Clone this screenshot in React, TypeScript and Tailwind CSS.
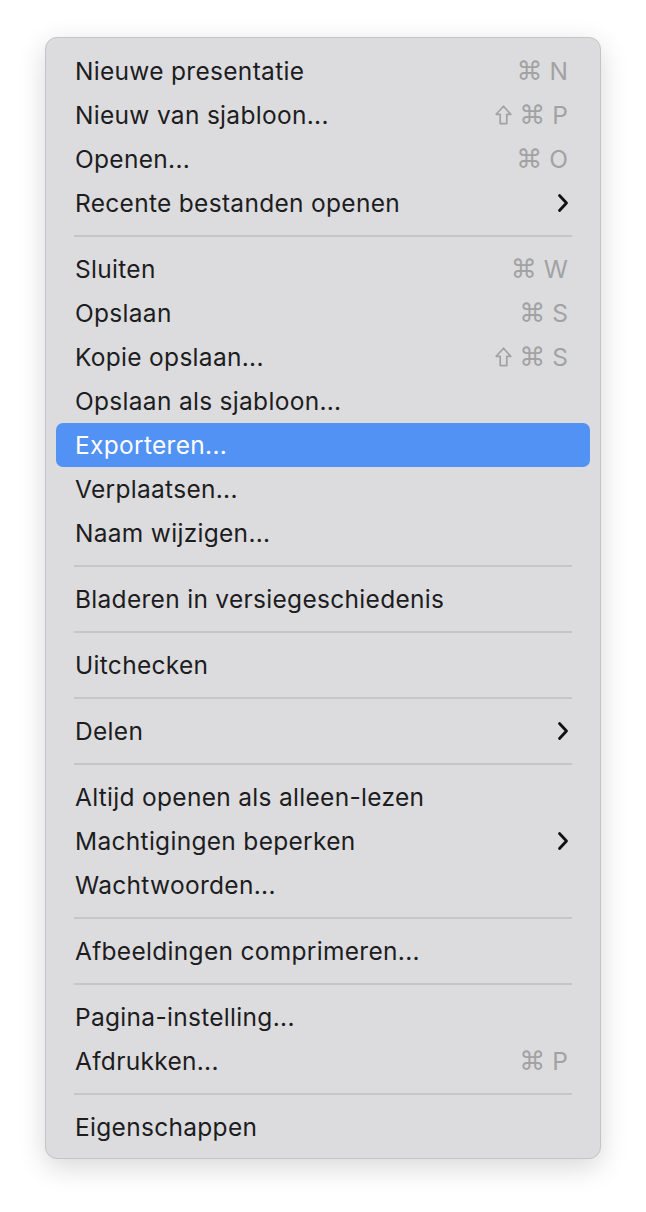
import React from "react";

type Item =
  | { type: "sep" }
  | { type: "item"; label: string; shortcut?: string[]; sub?: boolean; active?: boolean };

const items: Item[] = [
  { type: "item", label: "Nieuwe presentatie", shortcut: ["⌘", "N"] },
  { type: "item", label: "Nieuw van sjabloon...", shortcut: ["⇧", "⌘", "P"] },
  { type: "item", label: "Openen...", shortcut: ["⌘", "O"] },
  { type: "item", label: "Recente bestanden openen", sub: true },
  { type: "sep" },
  { type: "item", label: "Sluiten", shortcut: ["⌘", "W"] },
  { type: "item", label: "Opslaan", shortcut: ["⌘", "S"] },
  { type: "item", label: "Kopie opslaan...", shortcut: ["⇧", "⌘", "S"] },
  { type: "item", label: "Opslaan als sjabloon..." },
  { type: "item", label: "Exporteren...", active: true },
  { type: "item", label: "Verplaatsen..." },
  { type: "item", label: "Naam wijzigen..." },
  { type: "sep" },
  { type: "item", label: "Bladeren in versiegeschiedenis" },
  { type: "sep" },
  { type: "item", label: "Uitchecken" },
  { type: "sep" },
  { type: "item", label: "Delen", sub: true },
  { type: "sep" },
  { type: "item", label: "Altijd openen als alleen-lezen" },
  { type: "item", label: "Machtigingen beperken", sub: true },
  { type: "item", label: "Wachtwoorden..." },
  { type: "sep" },
  { type: "item", label: "Afbeeldingen comprimeren..." },
  { type: "sep" },
  { type: "item", label: "Pagina-instelling..." },
  { type: "item", label: "Afdrukken...", shortcut: ["⌘", "P"] },
  { type: "sep" },
  { type: "item", label: "Eigenschappen" },
];

function Chevron() {
  return (
    <svg width="12" height="20" viewBox="0 0 12 20" className="mr-[-1px]">
      <path d="M2.5 2.5 L9.5 10 L2.5 17.5" fill="none" stroke="#111" strokeWidth="2.8" strokeLinecap="round" strokeLinejoin="round" />
    </svg>
  );
}

function Shift() {
  return (
    <svg width="17" height="20" viewBox="0 0 17 20">
      <path
        d="M8.5 1.2 L15.8 9.3 L11.8 9.3 L11.8 18.6 L5.2 18.6 L5.2 9.3 L1.2 9.3 Z"
        fill="none"
        stroke="#a2a2a4"
        strokeWidth="1.7"
        strokeLinejoin="round"
      />
    </svg>
  );
}

export default function App() {
  return (
    <div className="w-[646px] h-[1212px] bg-white" style={{ fontFamily: "Inter, 'Noto Sans', sans-serif" }}>
      <div className="pt-[37px] pl-[45px]">
        <div className="w-[556px] rounded-[12px] border border-[#c4c4c6] bg-[#dcdcde] pt-[11px] pb-[9px] shadow-[0_8px_28px_rgba(0,0,0,0.16)]">
          {items.map((it, i) =>
            it.type === "sep" ? (
              <div key={i} className="h-[22px] flex items-center px-[28px]">
                <div className="h-[2px] w-full bg-[#c6c6c8]" />
              </div>
            ) : (
              <div key={i} className="px-[10px]">
                <div
                  className={
                    "h-[44px] rounded-[7px] flex items-center justify-between pl-[19px] pr-[22px] text-[24.5px] tracking-[0.3px] " +
                    (it.active ? "bg-[#5192f4] text-white" : "text-[#1d1d1f]")
                  }
                >
                  <span>{it.label}</span>
                  {it.shortcut && (
                    <span className="flex items-center gap-[7px] text-[#a2a2a4] text-[24.5px] tracking-normal">
                      {it.shortcut.map((s, j) =>
                        s === "⇧" ? (
                          <Shift key={j} />
                        ) : (
                          <span
                            key={j}
                            className={s === "⌘" ? "text-[26px] leading-none" : "leading-none"}
                            style={s === "⌘" ? { fontFamily: "'DejaVu Sans', sans-serif" } : undefined}
                          >
                            {s}
                          </span>
                        )
                      )}
                    </span>
                  )}
                  {it.sub && <Chevron />}
                </div>
              </div>
            )
          )}
        </div>
      </div>
    </div>
  );
}
